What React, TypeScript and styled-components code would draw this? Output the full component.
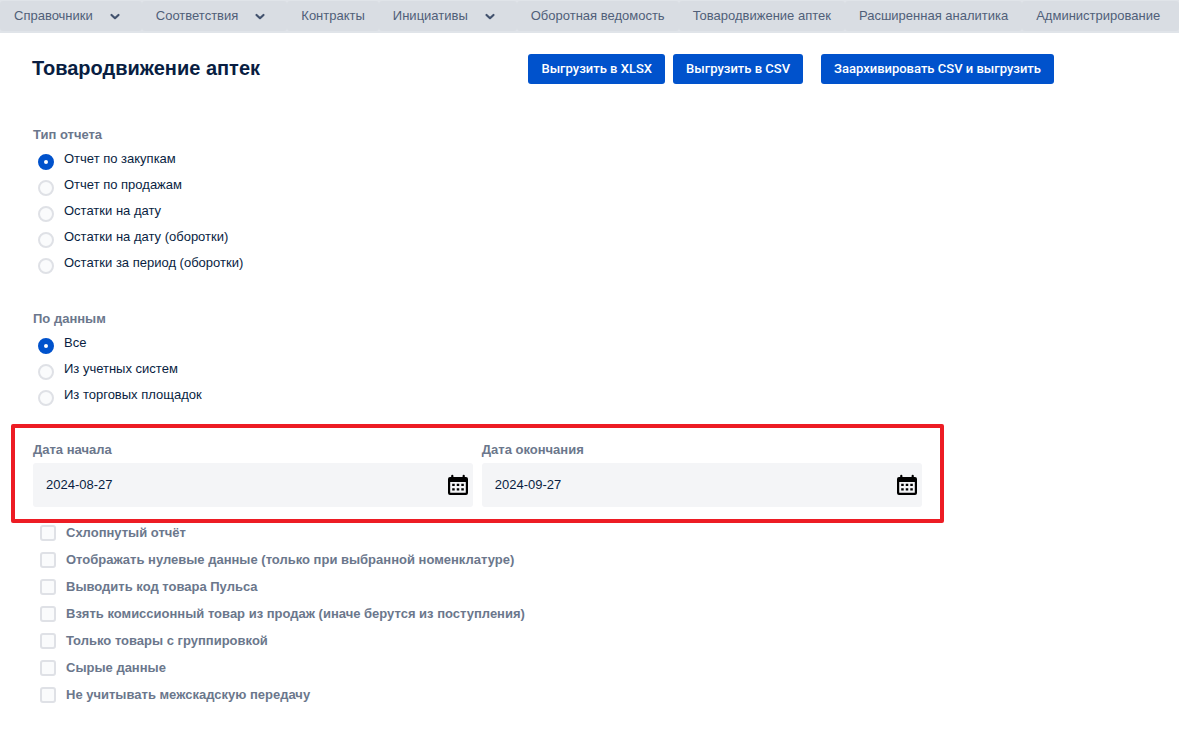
import React, { useState } from "react";
import styled, { createGlobalStyle } from "styled-components";

const GlobalStyle = createGlobalStyle`
  *, *::before, *::after { box-sizing: border-box; }
  body {
    margin: 0;
    background: #ffffff;
    color: #091e42;
    font-family: "Liberation Sans", Arial, sans-serif;
    font-size: 13px;
    line-height: 20px;
  }
`;

const NavBar = styled.nav`
  display: flex;
  padding: 1px 0 2px;
  background: #e0e4e9;
  overflow: hidden;
`;

const NavItem = styled.a<{ $menu?: boolean }>`
  display: flex;
  flex: none;
  align-items: center;
  gap: 15px;
  height: 30px;
  padding: 0 ${(p) => (p.$menu ? 20 : 14)}px 0 14px;
  border-radius: 3px;
  background: #d9dde3;
  color: #505f79;
  text-decoration: none;
  white-space: nowrap;

  &:last-child {
    flex-grow: 1;
  }
`;

const Header = styled.header`
  display: flex;
  align-items: center;
  justify-content: space-between;
  padding: 21px 125px 0 32px;
`;

const Title = styled.h1`
  margin: 0;
  padding-bottom: 2px;
  font-size: 20px;
  line-height: 24px;
  font-weight: 700;
`;

const Actions = styled.div`
  display: flex;
  gap: 8px;
`;

const ActionButton = styled.button<{ $apart?: boolean }>`
  height: 30px;
  margin-left: ${(p) => (p.$apart ? 10 : 0)}px;
  padding: 0 13px 2px;
  border: 0;
  border-radius: 3px;
  background: #0052cc;
  color: #ffffff;
  font-family: Roboto, sans-serif;
  font-size: 13px;
  font-weight: 500;
  white-space: nowrap;
`;

const RadioGroup = styled.fieldset<{ $top: number }>`
  display: flex;
  flex-direction: column;
  gap: 5px;
  margin: ${(p) => p.$top}px 0 0 33px;
  padding: 0;
  border: 0;
`;

const Legend = styled.legend`
  padding: 0 0 4px;
  color: #6b778c;
  font-weight: 700;
`;

const RadioRow = styled.label`
  display: flex;
  align-items: flex-start;
  gap: 10px;
  padding-left: 5px;
`;

const Radio = styled.input`
  appearance: none;
  flex: none;
  width: 16px;
  height: 16px;
  margin: 5px 0 0;
  border: 2px solid #dfe1e6;
  border-radius: 50%;
  background: #fafbfc;

  &:checked {
    border: 6px solid #0052cc;
    background: #ffffff;
  }
`;

const DateFrame = styled.section`
  display: grid;
  grid-template-columns: 1fr 1fr;
  gap: 9px;
  width: 79.1%;
  margin: 18px 0 0 11px;
  padding: 12px 18px;
  border: 4px solid #ed1c24;
  border-radius: 2px;
`;

const Field = styled.label`
  display: flex;
  flex-direction: column;
  gap: 3px;
  color: #6b778c;
  font-weight: 700;
`;

const FieldBox = styled.span`
  display: flex;
  align-items: center;
  height: 44px;
  padding: 0 4px 0 13px;
  border-radius: 3px;
  background: #f4f5f7;
`;

const DateInput = styled.input`
  flex: 1;
  min-width: 0;
  padding: 0;
  border: 0;
  outline: 0;
  background: transparent;
  color: #091e42;
  font: 400 13px/20px "Liberation Sans", Arial, sans-serif;
`;

const CheckList = styled.div`
  display: flex;
  flex-direction: column;
  gap: 7px;
  padding: 0 0 24px 40px;
`;

const CheckRow = styled.label`
  display: flex;
  align-items: center;
  gap: 10px;
  color: #6b778c;
  font-weight: 700;
`;

const Checkbox = styled.input`
  appearance: none;
  flex: none;
  width: 16px;
  height: 16px;
  margin: 0;
  border: 2px solid #dfe1e6;
  border-radius: 3px;
  background: #fafbfc;

  &:checked {
    border-color: #0052cc;
    background: #0052cc;
  }
`;

const Chevron = () => (
  <svg width="14" height="14" viewBox="0 0 14 14" fill="none" aria-hidden="true">
    <path d="M3.5 6 L7 9.2 L10.5 6" stroke="#42526e" strokeWidth="2.2" strokeLinecap="round" strokeLinejoin="round" />
  </svg>
);

const CalendarIcon = () => (
  <svg width="22" height="22" viewBox="0 0 22 22" aria-hidden="true">
    <path
      fill="#000000"
      fillRule="evenodd"
      d="M4.2 1.8a1.1 1.1 0 0 1 2.2 0V3h9.2V1.8a1.1 1.1 0 0 1 2.2 0V3H19a2 2 0 0 1 2 2v14a2 2 0 0 1-2 2H3a2 2 0 0 1-2-2V5a2 2 0 0 1 2-2h1.200zM3.200 8v10.300a.5.5 0 0 0 .5.5h14.600a.5.5 0 0 0 .5-.5V8z"
    />
    <path
      fill="#000000"
      d="M5.200 9.700h2.500v2.300H5.200zM9.750 9.700h2.500v2.300h-2.500zM14.300 9.700h2.500v2.300h-2.500zM5.200 14.200h2.500v2.300H5.200zM9.750 14.200h2.500v2.300h-2.500zM14.300 14.200h2.500v2.300h-2.500z"
    />
  </svg>
);

const navItems = [
  { label: "Справочники", menu: true },
  { label: "Соответствия", menu: true },
  { label: "Контракты" },
  { label: "Инициативы", menu: true },
  { label: "Оборотная ведомость" },
  { label: "Товародвижение аптек" },
  { label: "Расширенная аналитика" },
  { label: "Администрирование" },
];

const reportTypes = [
  "Отчет по закупкам",
  "Отчет по продажам",
  "Остатки на дату",
  "Остатки на дату (оборотки)",
  "Остатки за период (оборотки)",
];

const sources = ["Все", "Из учетных систем", "Из торговых площадок"];

const options = [
  "Схлопнутый отчёт",
  "Отображать нулевые данные (только при выбранной номенклатуре)",
  "Выводить код товара Пульса",
  "Взять комиссионный товар из продаж (иначе берутся из поступления)",
  "Только товары с группировкой",
  "Сырые данные",
  "Не учитывать межскадскую передачу",
];

function Choices({ title, name, items, top }: { title: string; name: string; items: string[]; top: number }) {
  return (
    <RadioGroup $top={top}>
      <Legend>{title}</Legend>
      {items.map((item, i) => (
        <RadioRow key={item}>
          <Radio type="radio" name={name} defaultChecked={i === 0} />
          {item}
        </RadioRow>
      ))}
    </RadioGroup>
  );
}

function DateField({ label, initial }: { label: string; initial: string }) {
  const [value, setValue] = useState(initial);
  return (
    <Field>
      {label}
      <FieldBox>
        <DateInput type="text" value={value} onChange={(e) => setValue(e.target.value)} />
        <CalendarIcon />
      </FieldBox>
    </Field>
  );
}

export default function App() {
  return (
    <>
      <GlobalStyle />
      <NavBar>
        {navItems.map((item) => (
          <NavItem key={item.label} href="#" $menu={item.menu}>
            {item.label}
            {item.menu && <Chevron />}
          </NavItem>
        ))}
      </NavBar>
      <main>
        <Header>
          <Title>Товародвижение аптек</Title>
          <Actions>
            <ActionButton type="button">Выгрузить в XLSX</ActionButton>
            <ActionButton type="button">Выгрузить в CSV</ActionButton>
            <ActionButton type="button" $apart>Заархивировать CSV и выгрузить</ActionButton>
          </Actions>
        </Header>
        <Choices title="Тип отчета" name="report" items={reportTypes} top={41} />
        <Choices title="По данным" name="source" items={sources} top={35} />
        <DateFrame>
          <DateField label="Дата начала" initial="2024-08-27" />
          <DateField label="Дата окончания" initial="2024-09-27" />
        </DateFrame>
        <CheckList>
          {options.map((option) => (
            <CheckRow key={option}>
              <Checkbox type="checkbox" />
              {option}
            </CheckRow>
          ))}
        </CheckList>
      </main>
    </>
  );
}
